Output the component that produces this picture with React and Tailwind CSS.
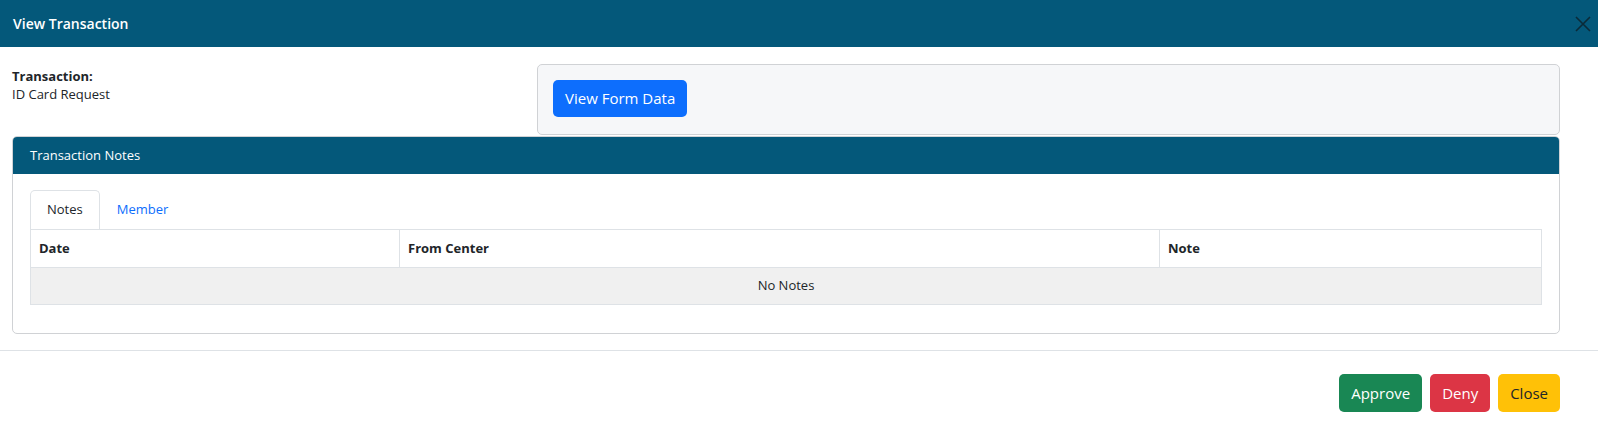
export default function App() {
  const f = { fontFamily: '"Segoe UI","Open Sans","Noto Sans",sans-serif' };
  return (
    <div style={f} className="w-full h-[422px] overflow-hidden bg-white text-[#212529] text-[13px]">
      <div className="h-[47px] bg-[#04587a] flex items-center justify-between pl-[13px] pr-[6px]">
        <span className="text-white text-[14px] font-semibold">View Transaction</span>
        <svg width="18" height="18" viewBox="0 0 18 18" stroke="#0b2a38" strokeWidth="1.6"><path d="M2 2L16 16M16 2L2 16" /></svg>
      </div>
      <div className="pl-[12px] pr-[38px] pt-[17px]">
        <div className="flex">
          <div className="w-[525px] pt-[2px]">
            <div className="font-bold leading-[20px]">Transaction:</div>
            <div className="leading-[17px]">ID Card Request</div>
          </div>
          <div className="flex-1 h-[71px] border border-[#d0d2d5] rounded-[5px] bg-[#f6f7f9] pl-[15px] pt-[15px]">
            <button className="h-[37px] px-[12px] rounded-[5px] bg-[#0d6efd] text-white text-[15px]">View Form Data</button>
          </div>
        </div>
        <div className="mt-[1px] h-[198px] border border-[#d0d2d5] rounded-[5px] overflow-hidden">
          <div className="h-[37px] bg-[#04587a] text-white flex items-center pl-[17px]">Transaction Notes</div>
          <div className="px-[17px] pt-[16px]">
            <div className="flex items-end h-[39px]">
              <div className="h-[39px] px-[16px] flex items-center border border-[#dee2e6] border-b-0 rounded-t-[5px] bg-white">Notes</div>
              <div className="h-[39px] px-[17px] flex items-center text-[#0d6efd]">Member</div>
            </div>
            <div className="border border-[#dee2e6]">
              <div className="flex h-[37px] items-center font-bold">
                <div className="w-[369px] h-full flex items-center px-[8px] border-r border-[#dee2e6]">Date</div>
                <div className="w-[760px] h-full flex items-center px-[8px] border-r border-[#dee2e6]">From Center</div>
                <div className="flex-1 px-[8px]">Note</div>
              </div>
              <div className="h-[37px] bg-[#f0f0f0] border-t border-[#dee2e6] flex items-center justify-center">No Notes</div>
            </div>
          </div>
        </div>
      </div>
      <div className="mt-[16px] border-t border-[#dee2e6] pt-[23px] flex justify-end gap-[8px] pr-[38px]">
        <button className="h-[38px] px-[12px] rounded-[5px] bg-[#198754] text-white text-[15px]">Approve</button>
        <button className="h-[38px] px-[12px] rounded-[5px] bg-[#dc3545] text-white text-[15px]">Deny</button>
        <button className="h-[38px] px-[12px] rounded-[5px] bg-[#ffc107] text-[#212529] text-[15px]">Close</button>
      </div>
    </div>
  );
}
